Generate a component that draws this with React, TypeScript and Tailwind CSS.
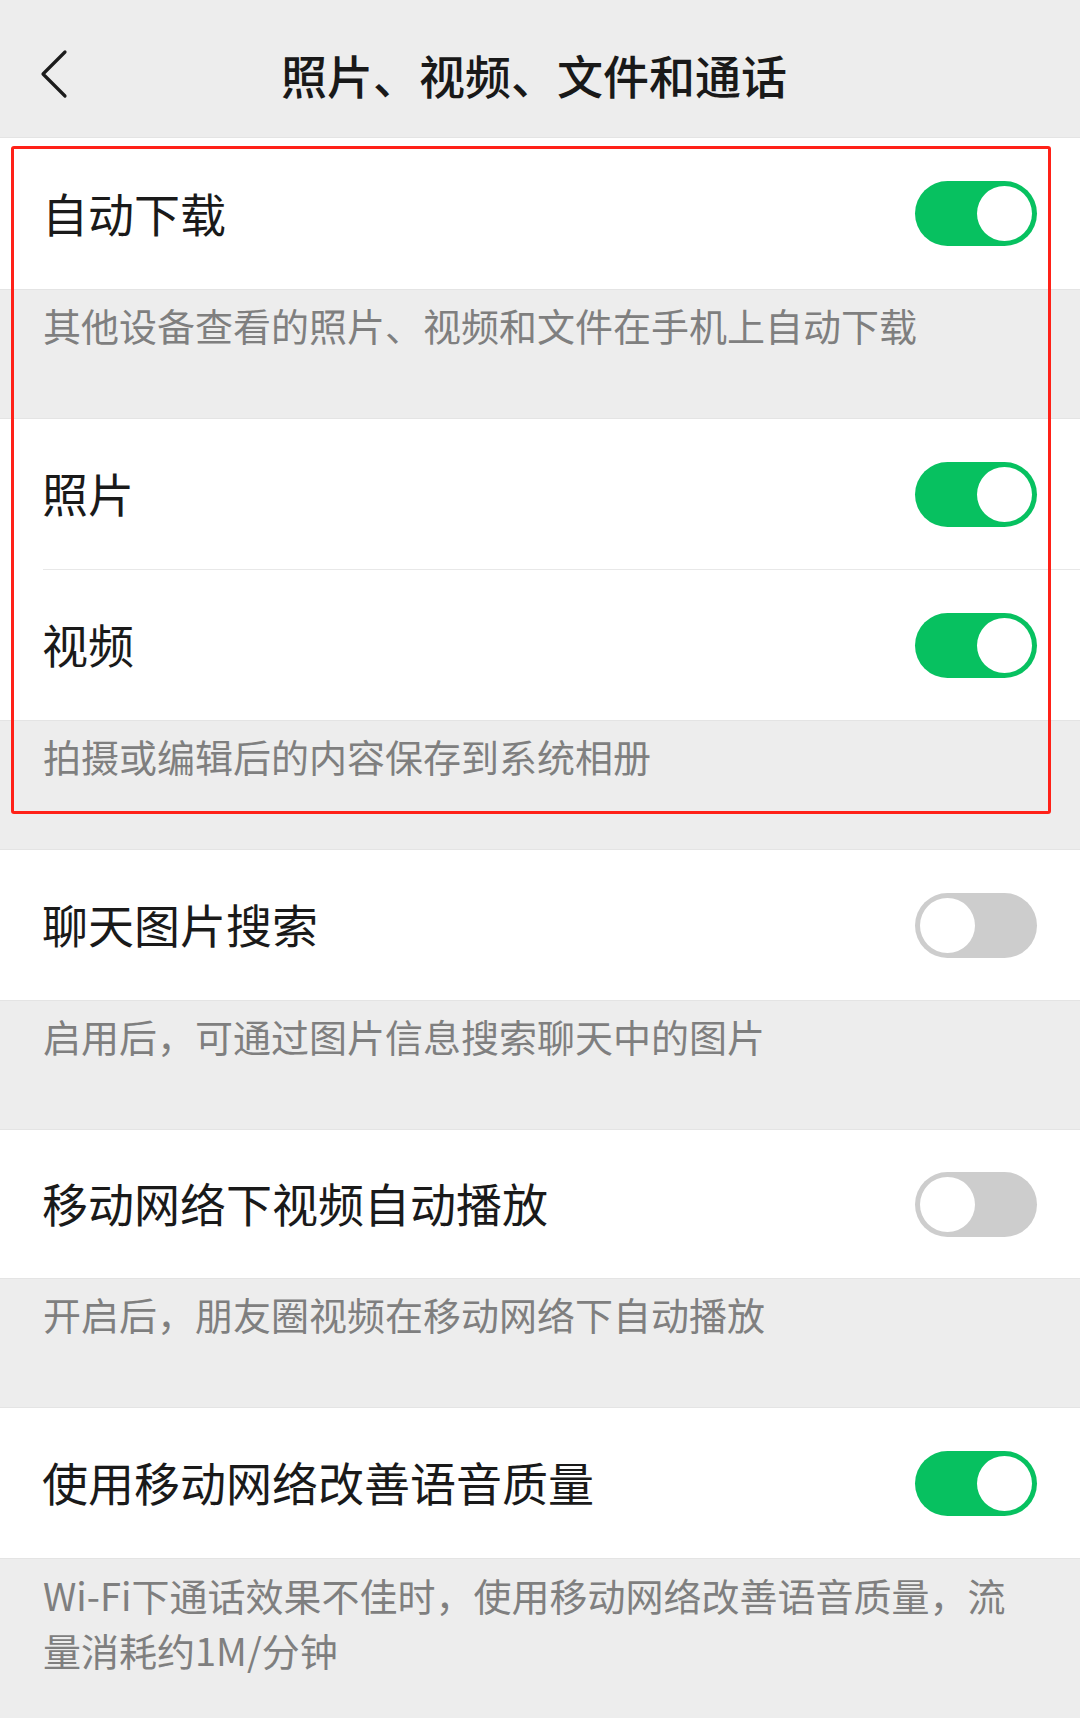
import React from 'react';

const FONT = '"Noto Sans CJK SC", "Noto Sans", sans-serif';

function Toggle({ on }: { on: boolean }) {
    return (
        <div className={`relative w-[122px] h-[65px] rounded-full shrink-0 ${on ? 'bg-[#07c160]' : 'bg-[#cdcdcd]'}`}>
            <div className={`absolute top-[5px] w-[55px] h-[55px] rounded-full bg-white ${on ? 'right-[5px]' : 'left-[5px]'}`}></div>
        </div>
    );
}

function SwitchRow({ label, on, h = 'h-[150px]' }: { label: string; on: boolean; h?: string }) {
    return (
        <div className={`${h} flex items-center justify-between pl-[42px] pr-[43px] bg-white`}>
            <span className="text-[46px] leading-none text-[#1a1a1a] mb-[4px]">{label}</span>
            <Toggle on={on} />
        </div>
    );
}

function Note({ children }: { children: React.ReactNode }) {
    return (
        <div className="h-[129px] pl-[43px] pt-[7px] border-t border-[#e4e4e4] bg-[#ededed]">
            <p className="text-[38px] leading-[55px] text-[#7f7f7f] whitespace-nowrap">{children}</p>
        </div>
    );
}

export default function App() {
    return (
        <div className="relative w-[1080px] min-h-[1718px] bg-[#ededed]" style={{ fontFamily: FONT }}>
            {/* title bar */}
            <div className="h-[138px] grid grid-cols-[1fr_auto_1fr] items-center pt-[10px] border-b border-[#e4e4e4]">
                <div className="pl-[40px]">
                    <svg width="30" height="50" viewBox="0 0 30 50" fill="none">
                        <path d="M25 3 L3 25 L25 47" stroke="#1c1c1c" strokeWidth="3.2" strokeLinecap="round" strokeLinejoin="round" />
                    </svg>
                </div>
                <h1 className="text-[46px] leading-none font-medium text-[#191919] pr-[12px]">照片、视频、文件和通话</h1>
                <div></div>
            </div>

            <SwitchRow label="自动下载" on h="h-[151px]" />
            <Note>其他设备查看的照片、视频和文件在手机上自动下载</Note>

            <div className="border-t border-[#e4e4e4]">
                <SwitchRow label="照片" on />
                <div className="bg-white pl-[43px]">
                    <div className="h-px bg-[#e8e8e8]"></div>
                </div>
                <SwitchRow label="视频" on />
            </div>
            <Note>拍摄或编辑后的内容保存到系统相册</Note>

            <div className="border-t border-[#e4e4e4]">
                <SwitchRow label="聊天图片搜索" on={false} />
            </div>
            <Note>启用后，可通过图片信息搜索聊天中的图片</Note>

            <div className="border-t border-[#e4e4e4]">
                <SwitchRow label="移动网络下视频自动播放" on={false} h="h-[148px]" />
            </div>
            <Note>开启后，朋友圈视频在移动网络下自动播放</Note>

            <div className="border-t border-[#e4e4e4]">
                <SwitchRow label="使用移动网络改善语音质量" on />
            </div>
            <div className="pl-[43px] pt-[8px] pb-[40px] border-t border-[#e4e4e4]">
                <p className="text-[38px] leading-[55px] text-[#7f7f7f] whitespace-nowrap">
                    Wi-Fi下通话效果不佳时，使用移动网络改善语音质量，流
                    <br />
                    量消耗约1M/分钟
                </p>
            </div>

            {/* annotation box */}
            <div className="absolute left-[11px] top-[146px] w-[1040px] h-[668px] border-[3px] border-[#ff2118] rounded-[3px] pointer-events-none"></div>
        </div>
    );
}
